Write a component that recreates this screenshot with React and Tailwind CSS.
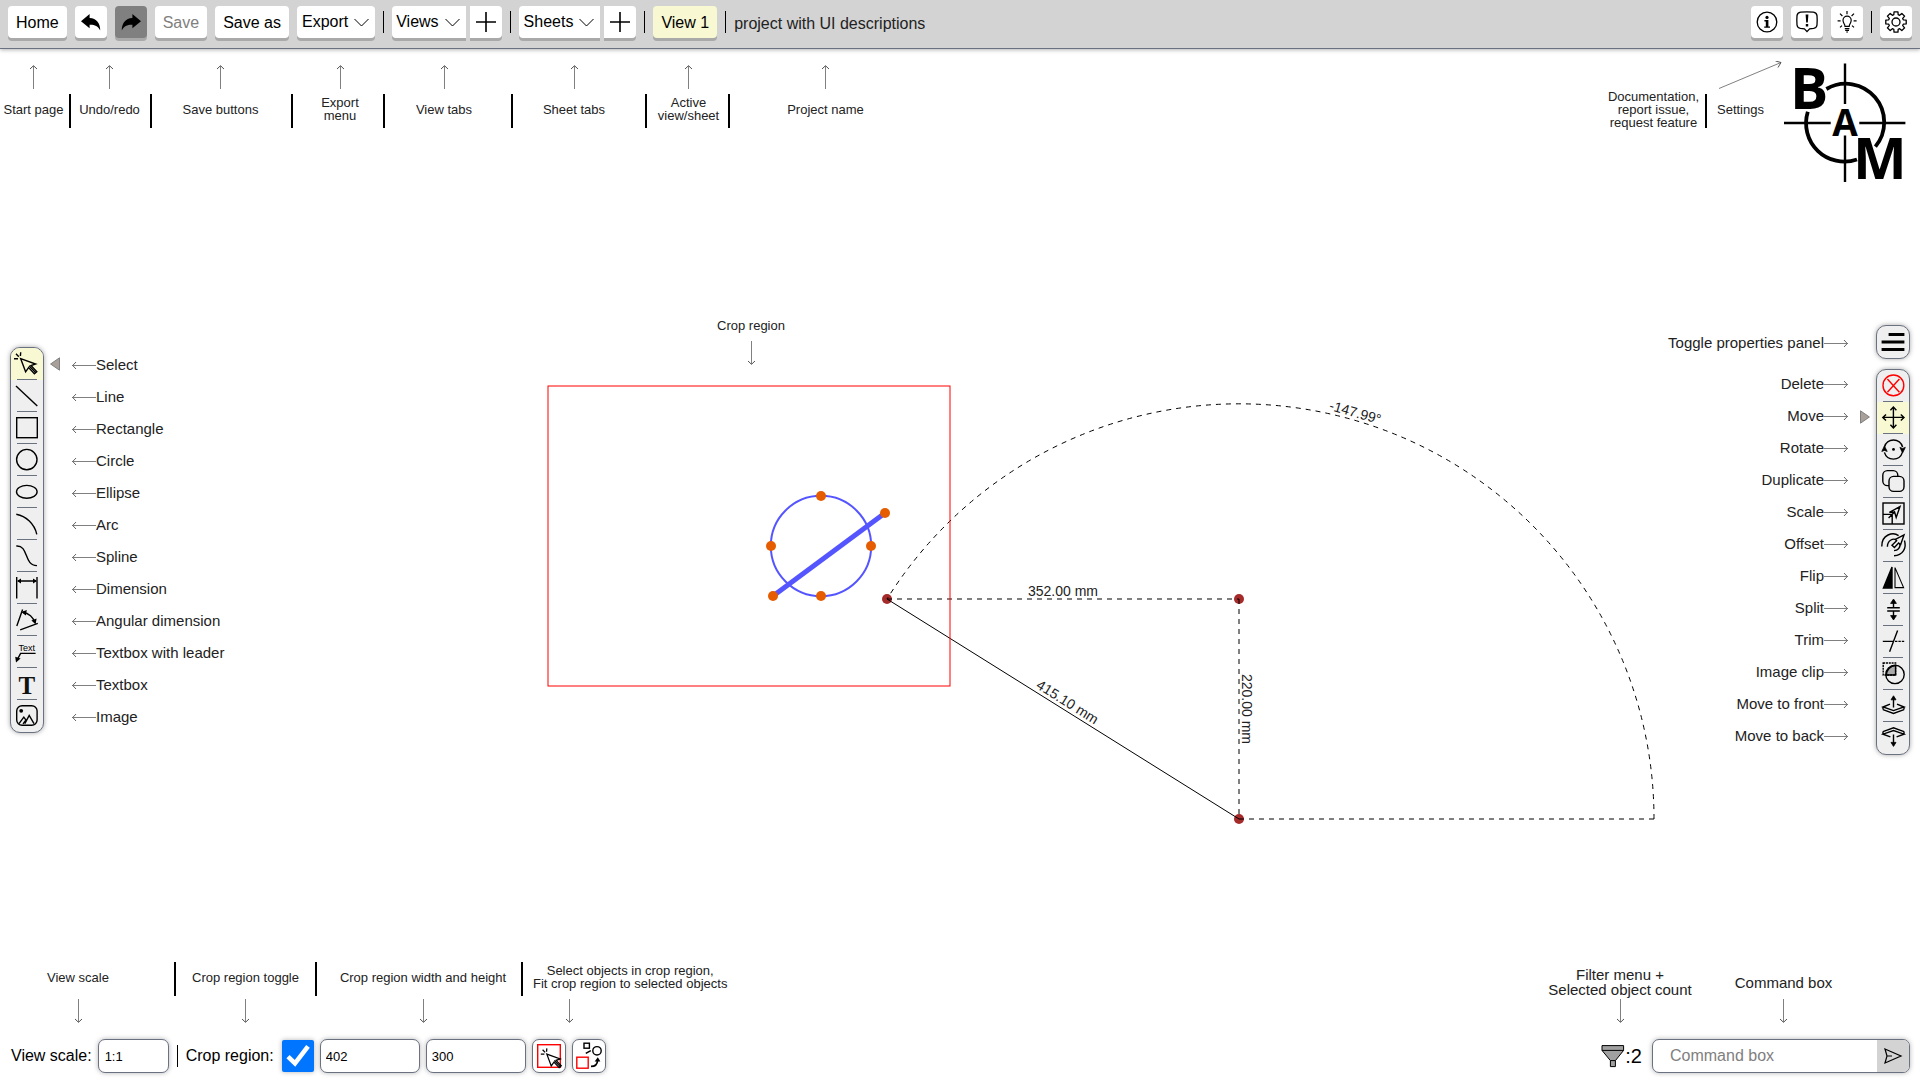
const NOTE = 'text-[13px] leading-[13px]'
const PANEL = 'rounded-[10px] border border-gray-500 bg-[#efefef] shadow-[0_0_5px_rgba(0,0,0,0.35)]'
const FIELD = 'h-[34px] rounded-[7px] border border-gray-500 bg-white shadow-[0_0_5px_rgba(0,0,0,0.3)]'

function Icon({ children, className = 'h-[22px] w-[22px]', viewBox = '0 0 22 22', width = 1.4 }) {
  return (
    <svg
      viewBox={viewBox}
      className={`shrink-0 overflow-visible ${className}`}
      fill="none"
      stroke="black"
      strokeWidth={width}
      aria-hidden="true"
    >
      {children}
    </svg>
  )
}

/* ---------- tool icons, drawn on a 22px grid ---------- */

const cursor = (
  <>
    <path d="M4.7 -0.7L4.4 3M0 0.8L2.8 3.8M-2 5.7H2" />
    <path d="M4.7 5.7L9.6 18.8L12.6 14.6L18.4 20.8L20.8 18.6L15 12.6L19.6 11Z" />
    <path d="M13 12.8L19.6 19.6" />
  </>
)

const selectTools = [
  { label: 'Select', icon: cursor, active: true },
  { label: 'Line', icon: <path d="M0 1L21.3 21" /> },
  { label: 'Rectangle', icon: <rect x="0.7" y="0.7" width="20.6" height="20" /> },
  { label: 'Circle', icon: <circle cx="10.8" cy="10.6" r="10.2" /> },
  { label: 'Ellipse', icon: <ellipse cx="10.8" cy="10.8" rx="10.3" ry="6.4" /> },
  { label: 'Arc', icon: <path d="M0.3 1.3C10 3 18.5 11 20.8 21.3" /> },
  { label: 'Spline', icon: <path d="M0.3 1C13 0 7.5 20.8 21 20.6" /> },
  {
    label: 'Dimension',
    icon: (
      <>
        <path d="M0.7 0V21.5M21 0V21.5M2 4H20" />
        <path d="M1 4L5 1.4V6.6ZM21 4L17 1.4V6.6Z" fill="black" stroke="none" />
      </>
    ),
  },
  {
    label: 'Angular dimension',
    icon: (
      <>
        <path d="M6.6 0.4L0.8 17M4.2 20.8L21.8 14.3M7 3.2C12.5 4 17.5 8.2 19 14" />
        <path d="M5.2 3L10.8 1L9.8 6.4ZM19.6 15.2L20.6 9.4L15.4 11.6Z" fill="black" stroke="none" />
      </>
    ),
  },
  {
    label: 'Textbox with leader',
    icon: (
      <>
        <text x="10.8" y="10" fontSize="9" textAnchor="middle" fill="black" stroke="none">
          Text
        </text>
        <path d="M19.6 12.4H4.6L1.8 17.6" />
        <path d="M0 21.6L-0.8 15.8L4.6 17.6Z" fill="black" stroke="none" />
      </>
    ),
  },
  {
    label: 'Textbox',
    icon: (
      <text
        x="10.8"
        y="20.6"
        fontSize="25"
        fontWeight="bold"
        fontFamily="Liberation Serif, serif"
        textAnchor="middle"
        fill="#111"
        stroke="none"
      >
        T
      </text>
    ),
  },
  {
    label: 'Image',
    icon: (
      <>
        <rect x="0.7" y="0.7" width="20.4" height="19.6" rx="5.4" />
        <circle cx="5.2" cy="5.8" r="1.9" fill="black" stroke="none" />
        <path d="M3 18.6L7.8 12.2L10 15.2M8.8 18.6L13.2 10.4L18 18.6M7 18.8L10 14.8" />
      </>
    ),
  },
]

const editTools = [
  {
    label: 'Delete',
    icon: (
      <g stroke="red">
        <circle cx="11.4" cy="10.4" r="10.4" />
        <path d="M5.4 4L17.4 17.2M17.4 4L5.4 17.2" />
      </g>
    ),
  },
  {
    label: 'Move',
    active: true,
    icon: <path d="M11.4 0V21M0.8 10.4H22M8.4 3.2L11.4 0L14.4 3.2M8.4 17.8L11.4 21L14.4 17.8M4 7.4L0.8 10.4L4 13.4M18.8 7.4L22 10.4L18.8 13.4" />,
  },
  {
    label: 'Rotate',
    icon: (
      <>
        <path d="M2.4 8A9.4 9.4 0 0 1 20.6 8M20.4 13.4A9.4 9.4 0 0 1 2.4 13.4" />
        <circle cx="11.5" cy="10.4" r="1.4" fill="black" stroke="none" />
        <path
          d="M2.4 7L-0.2 12.4L2.4 11.4L5.2 12.4ZM20.6 14L17.9 8.4L20.6 9.4L23.3 8.4Z"
          fill="black"
          strokeWidth="0.8"
        />
      </>
    ),
  },
  {
    label: 'Duplicate',
    icon: (
      <>
        <rect x="0.8" y="-0.4" width="15" height="15" rx="4.6" />
        <rect x="7" y="5.4" width="15" height="15" rx="4.6" fill="#efefef" />
      </>
    ),
  },
  {
    label: 'Scale',
    icon: (
      <>
        <rect x="1" y="0" width="21" height="21" />
        <path d="M1 11.4H10.2V21M6.6 15L13 8.4M7.4 9.4L18 3.6L14.2 14.4L12.6 9Z" />
      </>
    ),
  },
  {
    label: 'Offset',
    icon: (
      <>
        <path d="M-0.2 11.4C-0.4 -0.6 11 -3.4 16.6 0.6M22.4 5.4C25 13 20.6 20.4 12 20.8" />
        <path d="M5.4 11.8C5.4 5.4 11 3.2 14 4.6M18 8.4C18.6 13 15.6 15.4 12 15.6" />
        <path d="M13.4 4.4L22 0L18.6 9.8L16.6 8L12.4 12.4L10 10.2L14.6 5.8Z" />
      </>
    ),
  },
  {
    label: 'Flip',
    icon: (
      <>
        <path d="M10 0V21H1.4Z" fill="black" />
        <path d="M13 0.6V20.6H21.6Z" strokeWidth="1.1" />
      </>
    ),
  },
  {
    label: 'Split',
    icon: (
      <>
        <path d="M5.2 8.8H17.8M5.2 12H17.8M11.5 9V3M11.5 12V18" />
        <path d="M11.5 0L8.6 4.4H14.4ZM11.5 21L8.6 16.6H14.4Z" fill="black" strokeWidth="0.8" />
      </>
    ),
  },
  {
    label: 'Trim',
    icon: (
      <>
        <path d="M15.6 -0.4L7.6 20.8M0.8 10.4H11" />
        <path d="M13 10.4H22.4" strokeDasharray="2.4 1" />
      </>
    ),
  },
  {
    label: 'Image clip',
    icon: (
      <>
        <path d="M4.4 12A9.3 9.3 0 0 1 13.6 2.6V12Z" fill="#aaa" />
        <rect x="1.2" y="0" width="12.4" height="12" strokeDasharray="2 0.8" />
        <circle cx="13" cy="11.4" r="9.2" />
      </>
    ),
  },
  {
    label: 'Move to front',
    icon: (
      <>
        <path d="M8 9.2L1 12L11.5 15.6L22 12L15 9.2M1 14.6L11.5 18.4L22 14.6M1 12V14.6M22 12V14.6M11.5 12.6V4" />
        <path d="M11.5 0.8L9 4.8H14Z" fill="black" strokeWidth="0.8" />
      </>
    ),
  },
  {
    label: 'Move to back',
    icon: (
      <>
        <path d="M8.4 9.8L1 7.2L11.5 3.6L22 7.2L14.6 9.8M1 4.6L11.5 0.8L22 4.6M1 4.6V7.2M22 4.6V7.2M11.5 7.4V16" />
        <path d="M11.5 19.4L9 15.4H14Z" fill="black" strokeWidth="0.8" />
      </>
    ),
  },
]

/* ---------- small shared parts ---------- */

function ArrowUp() {
  return (
    <svg className="h-6 w-[9px]" fill="none" stroke="#808080" aria-hidden="true">
      <path d="M4.5 1V24" />
      <path d="M1 4L4.5 0.7L8 4" stroke="#555" />
    </svg>
  )
}

function ArrowDown({ className = '' }) {
  return (
    <svg className={`h-6 w-[9px] ${className}`} fill="none" stroke="#808080" aria-hidden="true">
      <path d="M4.5 0V23" />
      <path d="M1 20L4.5 23.3L8 20" stroke="#555" />
    </svg>
  )
}

function ArrowSide({ right = false }) {
  return (
    <svg className="h-[9px] w-6" fill="none" stroke="#808080" aria-hidden="true">
      <path d="M0 4.5H24" />
      <path d={right ? 'M20 1L23.3 4.5L20 8' : 'M4 1L0.7 4.5L4 8'} stroke="#666" />
    </svg>
  )
}

function BarButton({ label, children, className }) {
  return (
    <button
      type="button"
      aria-label={label}
      className={`flex h-8 shrink-0 items-center justify-center whitespace-nowrap shadow-[0_3px_0_#a9a9a9] ${className}`}
    >
      {children}
    </button>
  )
}

function Divider() {
  return <span className="h-[22px] w-px shrink-0 bg-black" />
}

function Chevron() {
  return (
    <Icon viewBox="0 0 15 9" className="h-[9px] w-[15px]" width={1}>
      <path d="M0.5 1L7.5 8L14.5 1" />
    </Icon>
  )
}

function Plus() {
  return (
    <Icon viewBox="0 0 20 20" className="h-5 w-5" width={1.6}>
      <path d="M10 0V20M0 10H20" />
    </Icon>
  )
}

const UNDO_PATH = 'M0 8.3L8.6 1V5C15.5 5.4 19.4 10.4 19.2 17.6C17 13 13.4 11.6 8.6 11.8V15.2Z'

// outline of a cog with eight rounded teeth around (11, 11)
const gearPath = (() => {
  const points = []
  for (let i = 0; i < 8; i++) {
    const mid = (i * Math.PI) / 4
    ;[
      [-0.29, 7.6],
      [-0.19, 10.4],
      [0.19, 10.4],
      [0.29, 7.6],
    ].forEach(([turn, r]) => {
      points.push(`${(11 + r * Math.sin(mid + turn)).toFixed(2)} ${(11 - r * Math.cos(mid + turn)).toFixed(2)}`)
    })
  }
  return `M${points.join('L')}Z`
})()

/* ---------- header ---------- */

function Header() {
  return (
    <header className="flex items-center gap-2 border-b border-gray-500 bg-[#d3d3d3] px-2 pt-1.5 pb-2.5 shadow-[0_1px_4px_rgba(0,0,0,0.3)]">
      <BarButton className="rounded bg-white px-2 pt-0.5">Home</BarButton>
      <BarButton label="Undo" className="w-8 rounded bg-white">
        <Icon viewBox="0 0 20 18" className="h-[18px] w-5">
          <path d={UNDO_PATH} fill="black" stroke="none" />
        </Icon>
      </BarButton>
      <BarButton label="Redo" className="w-8 rounded bg-[#808080]">
        <Icon viewBox="0 0 20 18" className="h-[18px] w-5 -scale-x-100">
          <path d={UNDO_PATH} fill="black" stroke="none" />
        </Icon>
      </BarButton>
      <BarButton className="rounded bg-white px-2 pt-0.5 text-[#808080]">Save</BarButton>
      <BarButton className="rounded bg-white px-2 pt-0.5">Save as</BarButton>
      <BarButton className="gap-1.5 rounded bg-white pr-1.5 pl-[5px]">
        Export <Chevron />
      </BarButton>
      <Divider />
      <div className="flex gap-1">
        <BarButton className="gap-1.5 rounded-l bg-white pr-1.5 pl-1">
          Views <Chevron />
        </BarButton>
        <BarButton label="Add view" className="w-8 rounded-r bg-white">
          <Plus />
        </BarButton>
      </div>
      <Divider />
      <div className="flex gap-1">
        <BarButton className="gap-1.5 rounded-l bg-white pr-1.5 pl-[5px]">
          Sheets <Chevron />
        </BarButton>
        <BarButton label="Add sheet" className="w-8 rounded-r bg-white">
          <Plus />
        </BarButton>
      </div>
      <Divider />
      <BarButton className="rounded bg-[#f8f8d2] px-2 pt-0.5">View 1</BarButton>
      <Divider />
      <h1 className="whitespace-nowrap pt-1 text-[#222]">project with UI descriptions</h1>

      <div className="ml-auto flex items-center gap-2">
        <BarButton label="Documentation" className="w-8 rounded bg-white">
          <Icon width={1.3}>
            <circle cx="11" cy="11" r="9.8" />
            <circle cx="11" cy="6.4" r="1.6" fill="black" stroke="none" />
            <path d="M8.4 9H12.4V15.4H14V16.8H8.2V15.4H9.8V10.4H8.4Z" fill="black" stroke="none" />
          </Icon>
        </BarButton>
        <BarButton label="Report issue" className="w-8 rounded bg-white">
          <Icon width={1.3}>
            <path d="M4.6 1.2Q11 0.4 17.4 1.2Q20.6 1.6 21 4.6Q21.4 9.4 21 14Q20.6 17 17.6 17.4L13.6 17.8L11 20.6L8.4 17.8L4.4 17.4Q1.4 17 1 14Q0.6 9.4 1 4.6Q1.4 1.6 4.6 1.2Z" />
            <path d="M9.6 3.4H12.4L11.8 11.6H10.2ZM9.8 13H12.2V15.4H9.8Z" fill="black" stroke="none" />
          </Icon>
        </BarButton>
        <BarButton label="Request feature" className="w-8 rounded bg-white">
          <Icon width={1.2}>
            <path d="M9 15.4C9 13.2 7 12.2 7 9.2A4.1 4.1 0 0 1 15.2 9.2C15.2 12.2 13.2 13.2 13.2 15.4Z" />
            <path d="M8.8 17.6H13.4M9.2 19.4H13M10.2 21H12M11 0V3.2M1.6 9.8H4.6M17.6 9.8H20.6M4 2.6L6.4 5M18 2.6L15.6 5M4 16.4L6 14.6M18 16.4L16 14.6" />
          </Icon>
        </BarButton>
        <Divider />
        <BarButton label="Settings" className="w-8 rounded bg-white">
          <Icon width={1.3}>
            <path d={gearPath} strokeLinejoin="round" />
            <circle cx="11" cy="11" r="4" />
          </Icon>
        </BarButton>
      </div>
    </header>
  )
}

/* ---------- notes under the header ---------- */

const topNotes = [
  { lines: ['Start page'], cell: 'w-[71px]', pad: 'pr-0.5' },
  { lines: ['Undo/redo'], cell: 'w-[81px]', pad: 'pr-0.5' },
  { lines: ['Save buttons'], cell: 'w-[141px]', pad: 'pr-0.5' },
  { lines: ['Export', 'menu'], cell: 'w-[92px]', pad: 'pl-1' },
  { lines: ['View tabs'], cell: 'w-[128px]', pad: 'pr-2' },
  { lines: ['Sheet tabs'], cell: 'w-[134px]', pad: 'pr-2.5' },
  { lines: ['Active', 'view/sheet'], cell: 'w-[83px]', pad: 'pl-0.5' },
  { lines: ['Project name'], cell: 'w-[191px]', pad: '', last: true },
]

function NoteText({ lines }) {
  return (
    <div className="flex h-[34px] items-center pb-1">
      <p className={`whitespace-nowrap text-center text-[#222] ${NOTE}`}>
        {lines.map((line) => (
          <span key={line} className="block">
            {line}
          </span>
        ))}
      </p>
    </div>
  )
}

function Bar() {
  return <span className="h-[34px] w-0.5 shrink-0 bg-black" />
}

function TopNotes() {
  return (
    <div className="flex items-start">
      {topNotes.map(({ lines, cell, pad, last }) => (
        <div key={lines[0]} className={`flex items-end pt-4 ${cell}`}>
          <div className={`flex flex-1 flex-col items-center gap-[5px] ${pad}`}>
            <ArrowUp />
            <NoteText lines={lines} />
          </div>
          {!last && <Bar />}
        </div>
      ))}

      <div className="ml-auto flex items-start pr-[14px]">
        <div className="flex items-center gap-1.5 pt-[45px]">
          <NoteText lines={['Documentation,', 'report issue,', 'request feature']} />
          <Bar />
        </div>
        <div className="flex flex-col items-start gap-[5px] pt-3 pl-2.5">
          <svg className="h-7 w-[67px]" fill="none" stroke="#808080" aria-hidden="true">
            <path d="M2 27.5L64 1.5" />
            <path d="M58.5 0L64 1.5L61 6.5" stroke="#555" />
          </svg>
          <NoteText lines={['Settings']} />
        </div>
        <Logo />
      </div>
    </div>
  )
}

function Logo() {
  return (
    <svg viewBox="0 0 122 120" className="mt-3.5 h-[120px] w-[122px] overflow-visible" role="img" aria-label="BAM">
      <g fill="none" stroke="black">
        <path d="M0 60H46.7M75.3 60H121.4M61 0.4V41M61 72.5V119" strokeWidth="2.4" />
        <path d="M42.4 26A38.4 38.4 0 0 1 91.4 83.6M23.8 48.8A38.4 38.4 0 0 0 73 96.5" strokeWidth="3.8" />
      </g>
      <g fontFamily="Open Sans, Noto Sans, sans-serif" fontWeight="bold">
        <text x="6" y="46" fontSize="57">
          B
        </text>
        <text x="61" y="72.8" fontSize="37" textAnchor="middle">
          A
        </text>
        <text x="69" y="116" fontSize="57">
          M
        </text>
      </g>
    </svg>
  )
}

/* ---------- tool panels ---------- */

function ToolPanel({ tools }) {
  return (
    <div className={`flex w-[34px] flex-col overflow-hidden ${PANEL}`}>
      {tools.map(({ label, icon, active }, index) => (
        <button
          key={label}
          type="button"
          aria-label={label}
          aria-pressed={Boolean(active)}
          className={`flex h-8 flex-col items-center pt-[5px] ${active ? 'bg-[#f8f8d2]' : ''}`}
        >
          <Icon>{icon}</Icon>
          {index < tools.length - 1 && <span className="mt-1 h-px w-5 bg-gray-500" />}
        </button>
      ))}
    </div>
  )
}

function LeftTools() {
  return (
    <div className="flex items-start pl-2.5">
      <ToolPanel tools={selectTools} />
      <div className="flex h-8 w-7 items-center pt-px pl-1.5">
        <svg className="h-[14px] w-[10px]" aria-hidden="true">
          <path d="M0.6 7L9.5 0.8V13.2Z" fill="#a9a09a" stroke="#808080" />
        </svg>
      </div>
      <ul className="pt-0.5">
        {selectTools.map(({ label }) => (
          <li key={label} className="flex h-8 items-center whitespace-nowrap text-[15px] text-[#222]">
            <ArrowSide />
            {label}
          </li>
        ))}
      </ul>
    </div>
  )
}

function RightTools() {
  return (
    <div className="flex flex-col items-end gap-2.5 pr-2.5">
      <div className="flex items-center gap-7">
        <p className="flex items-center whitespace-nowrap pt-0.5 text-[15px] text-[#222]">
          Toggle properties panel
          <ArrowSide right />
        </p>
        <button
          type="button"
          aria-label="Toggle properties panel"
          className={`flex h-[34px] w-[34px] items-center justify-center ${PANEL}`}
        >
          <Icon viewBox="0 0 24 20" className="h-5 w-6" width={3}>
            <path d="M7.6 2.4H23.4M0.6 10H23.4M0.6 17.6H23.4" />
          </Icon>
        </button>
      </div>
      <div className="flex items-start">
        <ul>
          {editTools.map(({ label }) => (
            <li
              key={label}
              className="flex h-8 items-center justify-end whitespace-nowrap pb-0.5 text-[15px] text-[#222]"
            >
              {label}
              <ArrowSide right />
            </li>
          ))}
        </ul>
        <div className="flex h-16 w-7 items-end justify-end pr-1.5 pb-[9px]">
          <svg className="h-[14px] w-[10px]" aria-hidden="true">
            <path d="M9.4 7L0.5 0.8V13.2Z" fill="#a9a09a" stroke="#808080" />
          </svg>
        </div>
        <ToolPanel tools={editTools} />
      </div>
    </div>
  )
}

/* ---------- drawing canvas ---------- */

const grips = [
  [821, 496],
  [771, 546],
  [871, 546],
  [821, 596],
  [773, 596],
  [885, 513],
]

const dimensionPoints = [
  [887, 599],
  [1239, 599],
  [1239, 819],
]

function DrawingCanvas() {
  return (
    <svg viewBox="0 0 1920 1080" className="absolute inset-0 -z-10 h-full w-full" fill="none">
      <text x="751" y="330" fontSize="13" textAnchor="middle" fill="#222">
        Crop region
      </text>
      <path d="M751.5 341V364" stroke="#808080" />
      <path d="M748 361L751.5 364.3L755 361" stroke="#555" />

      <circle cx="821" cy="546" r="50.2" stroke="#5555ff" strokeWidth="2" />
      <path d="M773 596L885 513" stroke="#5555ff" strokeWidth="5" />
      {grips.map(([x, y]) => (
        <circle key={`${x}-${y}`} cx={x} cy={y} r="5" fill="#e65c00" />
      ))}

      {dimensionPoints.map(([x, y]) => (
        <circle key={`${x}-${y}`} cx={x} cy={y} r="5" fill="#a52a2a" />
      ))}
      <g stroke="black">
        <path d="M887 599L1239 819" />
        <path d="M887 599H1239" strokeDasharray="5 5" />
        <path d="M1239 599V819" strokeDasharray="5 5" />
        <path d="M1239 819H1654" strokeDasharray="5 5" />
        <path d="M1654 819A415 415 0 0 0 887 599" strokeDasharray="5 5" />
      </g>
      <rect x="548" y="386" width="402" height="300" stroke="red" />

      <g fontSize="14" textAnchor="middle" fill="#222">
        <text x="1063" y="596">352.00 mm</text>
        <text transform="translate(1065 706) rotate(32)">415.10 mm</text>
        <text transform="translate(1242 709) rotate(90)">220.00 mm</text>
        <text transform="translate(1354 417) rotate(16)">-147.99°</text>
      </g>
    </svg>
  )
}

/* ---------- footer ---------- */

const footerNotes = [
  { text: 'View scale', cell: 'w-[176px]', pad: 'pr-[18px]' },
  { text: 'Crop region toggle', cell: 'w-[141px]', pad: '' },
  { text: 'Crop region width and height', cell: 'w-[206px]', pad: 'pl-2' },
]

function FooterNotes() {
  return (
    <div className="flex items-end justify-between">
      <div className="flex items-start">
        {footerNotes.map(({ text, cell, pad }) => (
          <div key={text} className={`flex ${cell}`}>
            <div className={`flex flex-1 flex-col items-center gap-[3px] ${pad}`}>
              <NoteText lines={[text]} />
              <ArrowDown />
            </div>
            <Bar />
          </div>
        ))}
        <div className="flex flex-col gap-[3px] pl-2.5">
          <NoteText lines={['Select objects in crop region,', 'Fit crop region to selected objects']} />
          <ArrowDown className="ml-8" />
        </div>
      </div>

      <div className="flex items-end pr-[46px] text-center text-[15px] text-[#222]">
        <div className="flex w-[146px] flex-col items-center gap-0.5">
          <p className="whitespace-nowrap leading-[15px]">
            Filter menu +<br />
            Selected object count
          </p>
          <ArrowDown />
        </div>
        <div className="flex w-[181px] flex-col items-center gap-1">
          <p className="whitespace-nowrap leading-6">Command box</p>
          <ArrowDown />
        </div>
      </div>
    </div>
  )
}

function Footer() {
  return (
    <footer className="flex flex-col justify-end gap-4 pb-[7px]">
      <FooterNotes />
      <div className="flex items-center justify-between">
        <div className="flex items-center gap-2 pl-[11px]">
          <div className="flex items-center gap-1.5">
            <label htmlFor="view-scale" className="whitespace-nowrap">
              View scale:
            </label>
            <input id="view-scale" defaultValue="1:1" className={`w-[71px] px-1.5 text-[13px] ${FIELD}`} />
          </div>
          <Divider />
          <label htmlFor="crop-toggle" className="whitespace-nowrap">
            Crop region:
          </label>
          <div className="flex items-center gap-1.5">
            <span className="relative flex h-8 w-8">
              <input
                id="crop-toggle"
                type="checkbox"
                defaultChecked
                className="peer h-8 w-8 appearance-none rounded-xs border border-gray-500 shadow-[0_0_5px_rgba(0,0,0,0.3)] checked:border-0 checked:bg-[#0075ff]"
              />
              <svg
                viewBox="0 0 32 32"
                className="pointer-events-none absolute inset-0 hidden peer-checked:block"
                fill="none"
                stroke="white"
                strokeWidth="4.6"
                aria-hidden="true"
              >
                <path d="M6 16.6L13 23.4L26 6.4" />
              </svg>
            </span>
            <input
              aria-label="Crop region width"
              defaultValue="402"
              className={`w-[100px] px-[5px] text-[13px] ${FIELD}`}
            />
            <input
              aria-label="Crop region height"
              defaultValue="300"
              className={`w-[100px] px-[5px] text-[13px] ${FIELD}`}
            />
            <button
              type="button"
              aria-label="Select objects in crop region"
              className={`flex w-[34px] items-center justify-center ${FIELD}`}
            >
              <Icon viewBox="0 0 24 24" className="h-6 w-6">
                <rect x="0.7" y="0.7" width="22.6" height="22.6" stroke="red" />
                <g transform="translate(5.6 5) scale(0.9)">{cursor}</g>
              </Icon>
            </button>
            <button
              type="button"
              aria-label="Fit crop region to selected objects"
              className={`flex w-[34px] items-center justify-center ${FIELD}`}
            >
              <Icon viewBox="0 0 26 26" className="h-[26px] w-[26px]">
                <rect x="0.8" y="14.2" width="11.4" height="11" stroke="red" />
                <rect x="8" y="0.2" width="5.4" height="5" />
                <path d="M14.8 7.6L9.8 10.4" strokeWidth="1.6" />
                <circle cx="21" cy="7.8" r="4.2" />
                <path d="M15 23.4C19.6 23.4 21.4 20.6 21.6 17.4" strokeWidth="1.7" />
                <path d="M21.8 14.2L18.6 18.4H24.4Z" fill="black" stroke="none" />
              </Icon>
            </button>
          </div>
        </div>

        <div className="flex items-center gap-2.5 pr-2.5">
          <button type="button" aria-label="Filter menu" className="flex items-center text-xl">
            <Icon viewBox="0 0 24 22" className="h-[22px] w-6" width={1}>
              <path d="M1 0.6H22.6V5.4L14.4 15.6V21.6H9.4V15.6L1 5.4ZM1 5.4H22.6M9.4 15.6H14.4" fill="#a0a0a0" />
            </Icon>
            :2
          </button>
          <form className={`flex w-[258px] overflow-hidden ${FIELD}`} onSubmit={(e) => e.preventDefault()}>
            <input
              aria-label="Command box"
              placeholder="Command box"
              className="min-w-0 flex-1 pl-[17px] outline-none placeholder:text-[#808080]"
            />
            <button type="submit" aria-label="Send" className="flex w-8 items-center justify-center bg-[#d3d3d3]">
              <Icon viewBox="0 0 18 16" className="h-4 w-[18px]" width={1.2}>
                <path d="M1 1L17 8L1 15L3 8ZM3 8H8" />
              </Icon>
            </button>
          </form>
        </div>
      </div>
    </footer>
  )
}

export default function App() {
  return (
    <div className="relative isolate grid min-h-screen grid-rows-[1fr_auto_1fr] overflow-hidden bg-white font-['Liberation_Sans',Arial,sans-serif] text-base text-black">
      <DrawingCanvas />
      <div>
        <Header />
        <TopNotes />
      </div>
      <main className="flex items-center justify-between">
        <LeftTools />
        <RightTools />
      </main>
      <Footer />
    </div>
  )
}
